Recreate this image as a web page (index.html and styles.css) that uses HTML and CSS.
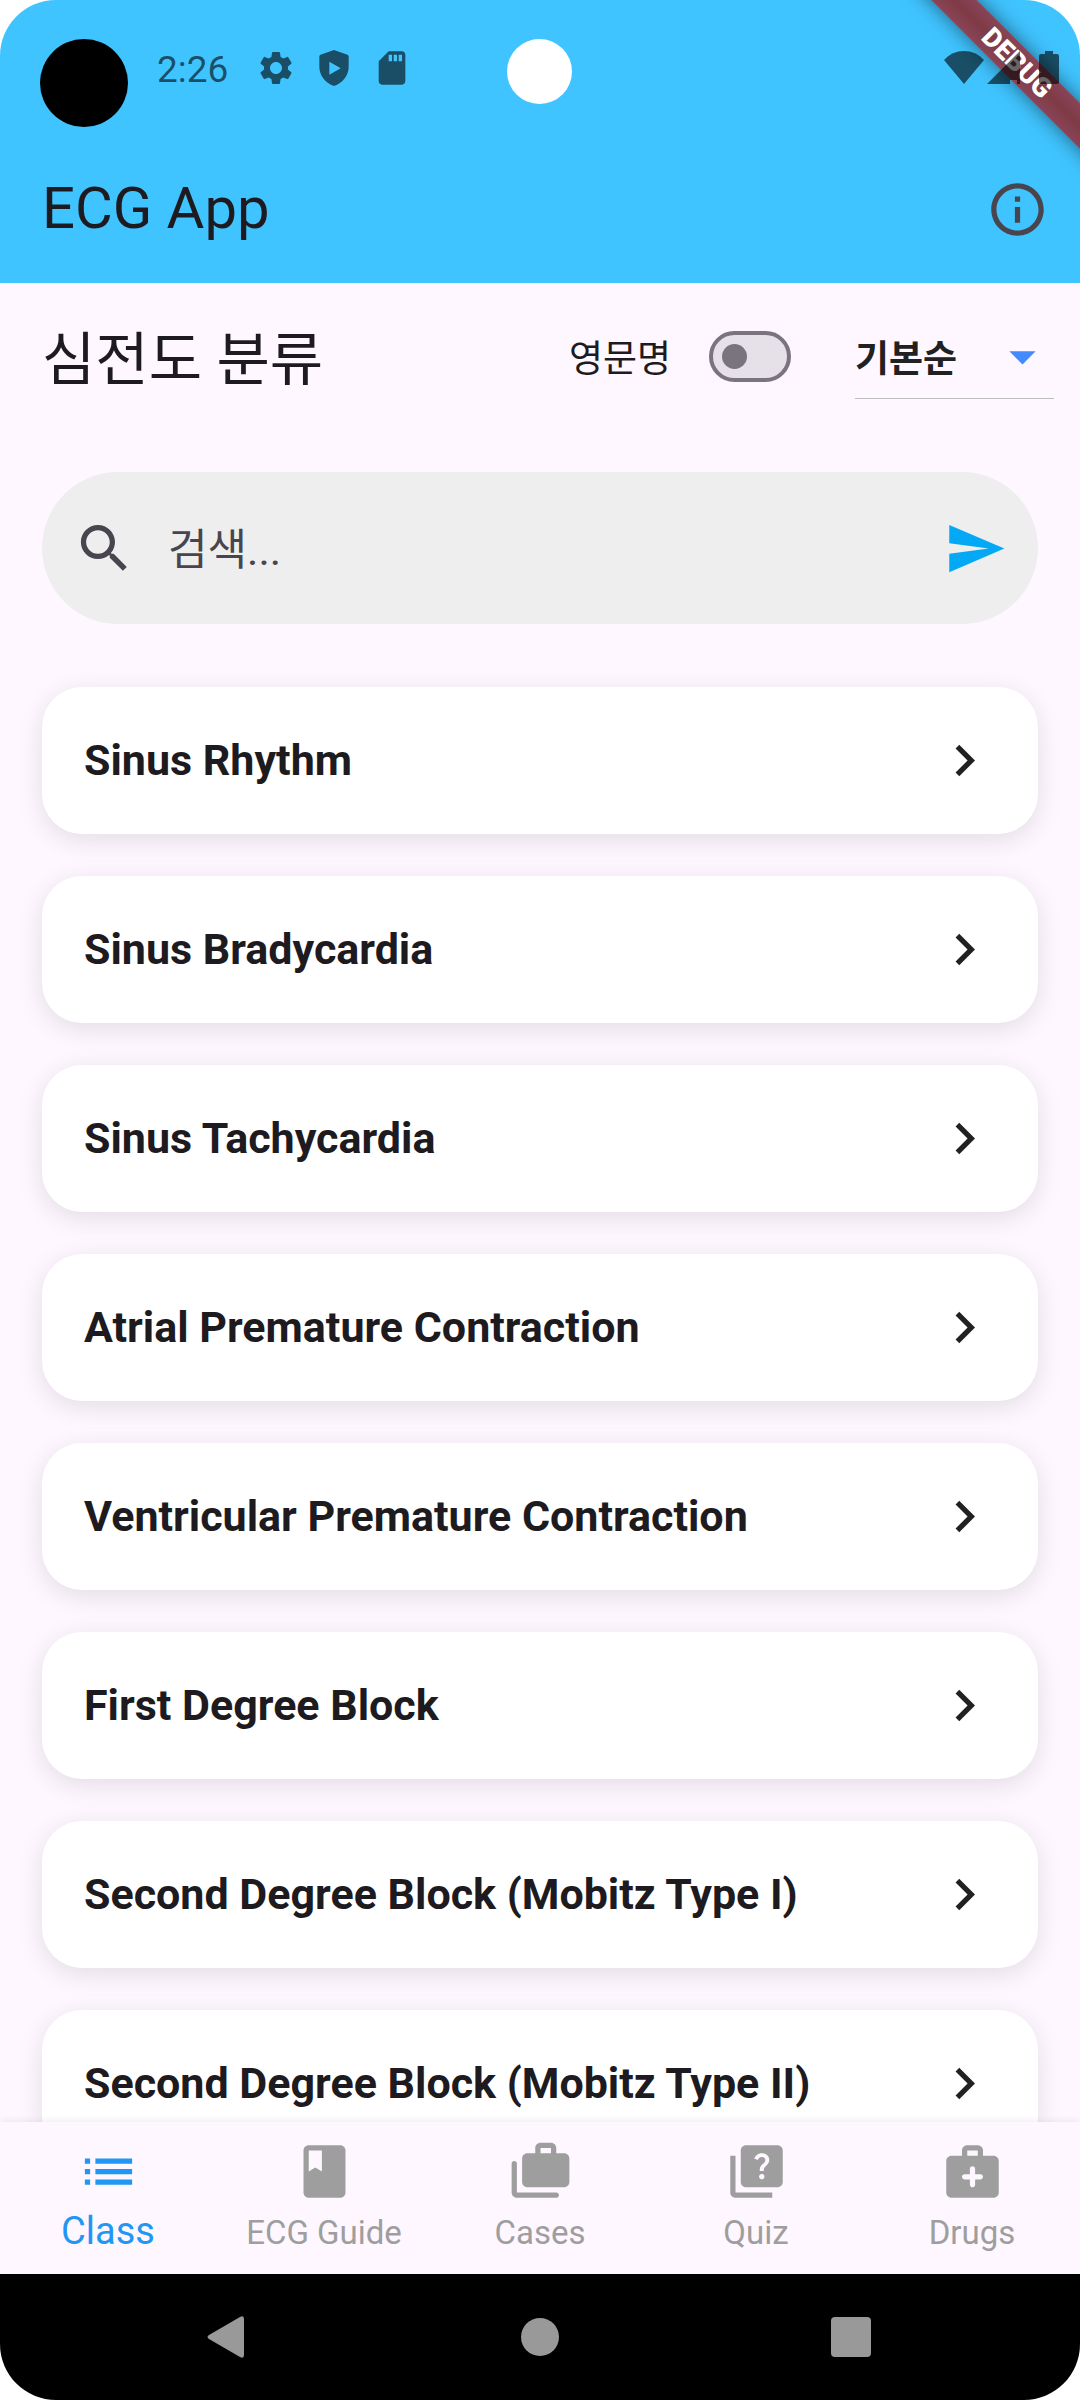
FILE: index.html
```html
<!DOCTYPE html>
<html lang="ko">
<head>
<meta charset="utf-8">
<meta name="viewport" content="width=device-width, initial-scale=1">
<title>ECG App</title>
<link rel="stylesheet" href="styles.css">
</head>
<body>
<div class="screen">
  <header class="header">
    <div class="banner" aria-hidden="true"><span class="banner-band">DEBUG</span></div>
    <div class="status">
      <span class="status-dot"></span>
      <span class="status-clock">2:26</span>
      <div class="status-icons">
        <svg viewBox="0 0 24 24"><path d="M19.14 12.94c.04-.3.06-.61.06-.94 0-.32-.02-.64-.07-.94l2.03-1.58c.18-.14.23-.41.12-.61l-1.92-3.32c-.12-.22-.37-.29-.59-.22l-2.39.96c-.5-.38-1.03-.7-1.62-.94L14.4 2.81c-.04-.24-.24-.41-.48-.41h-3.84c-.24 0-.43.17-.47.41L9.25 5.35C8.66 5.59 8.12 5.92 7.63 6.29L5.24 5.33c-.22-.08-.47 0-.59.22L2.74 8.87c-.12.21-.08.47.12.61l2.03 1.58c-.05.3-.09.63-.09.94s.02.64.07.94l-2.03 1.58c-.18.14-.23.41-.12.61l1.92 3.32c.12.22.37.29.59.22l2.39-.96c.5.38 1.03.7 1.62.94l.36 2.54c.05.24.24.41.48.41h3.84c.24 0 .44-.17.47-.41l.36-2.54c.59-.24 1.13-.56 1.62-.94l2.39.96c.22.08.47 0 .59-.22l1.92-3.32c.12-.22.07-.47-.12-.61l-2.01-1.58zM12 15.6c-1.98 0-3.6-1.62-3.6-3.6s1.62-3.6 3.6-3.6 3.6 1.62 3.6 3.6-1.62 3.6-3.6 3.6z"/></svg>
        <svg viewBox="0 0 24 24"><path fill-rule="evenodd" d="M12 1.2l8.1 2.9c.4.2.7.6.7 1.1v6c0 5.300-3.600 9.700-8.800 11.600C6.800 20.900 3.200 16.500 3.200 11.200v-6c0-.5.300-.9.700-1.100zM9.200 8.200v7.800l6.800-3.900z"/></svg>
        <svg viewBox="0 0 24 24"><path d="M18 2h-8L4.020 8 4 20c0 1.100.9 2 2 2h12c1.100 0 2-.9 2-2V4c0-1.100-.9-2-2-2zm-6 6h-2V4h2v4zm3 0h-2V4h2v4zm3 0h-2V4h2v4z"/></svg>
      </div>
      <span class="camera"></span>
      <div class="status-signal">
        <svg width="40" height="33" viewBox="0 0 40 33"><path d="M20 33L0 9Q8 0 20 0T40 9z"/></svg>
        <svg width="33" height="33" viewBox="0 0 33 33"><path d="M0 33L33 0V33H30V12H23V33zM23 29V12H30V29z" fill-rule="evenodd"/></svg>
        <svg class="battery" width="20" height="33" viewBox="0 0 20 33"><path d="M6 0h8v3h4q2 0 2 2v26q0 2-2 2H2q-2 0-2-2V5q0-2 2-2h4z"/></svg>
      </div>
    </div>
    <div class="appbar">
      <h1 class="appbar-title">ECG App</h1>
      <button class="icon-button" type="button" aria-label="Info">
        <svg class="icon" viewBox="0 0 24 24"><path d="M11 7h2v2h-2zm0 4h2v6h-2zm1-9C6.480 2 2 6.480 2 12s4.480 10 10 10 10-4.480 10-10S17.520 2 12 2zm0 18c-4.410 0-8-3.590-8-8s3.590-8 8-8 8 3.590 8 8-3.590 8-8 8z"/></svg>
      </button>
    </div>
  </header>

  <main class="content">
    <div class="toolbar">
      <h2 class="toolbar-title">심전도 분류</h2>
      <label class="toggle"><span class="toggle-label">영문명</span><input class="toggle-switch" type="checkbox" role="switch"></label>
      <div class="sort">
        <select class="sort-select" aria-label="정렬"><option>기본순</option></select>
        <svg class="icon sort-arrow" viewBox="0 0 24 24"><path d="M7 10l5 5 5-5z"/></svg>
      </div>
    </div>

    <form class="search" role="search">
      <svg class="icon" viewBox="0 0 24 24"><path d="M15.500 14h-.79l-.28-.27C15.410 12.590 16 11.110 16 9.500 16 5.910 13.090 3 9.500 3S3 5.910 3 9.500 5.910 16 9.500 16c1.610 0 3.090-.59 4.230-1.570l.27.28v.79l5 4.990L20.490 19l-4.990-5zm-6 0C7.010 14 5 11.990 5 9.500S7.010 5 9.500 5 14 7.010 14 9.500 11.990 14 9.500 14z"/></svg>
      <input class="search-input" type="text" placeholder="검색..." aria-label="검색">
      <button class="icon-button send" type="button" aria-label="Send">
        <svg class="icon" viewBox="0 0 24 24"><path d="M2.010 21L23 12 2.010 3 2 10l15 2-15 2z"/></svg>
      </button>
    </form>

    <div class="list">
      <button class="card" type="button">Sinus Rhythm<svg class="icon" viewBox="0 0 24 24"><path d="M10 6L8.590 7.410 13.170 12l-4.580 4.590L10 18l6-6z"/></svg></button>
      <button class="card" type="button">Sinus Bradycardia<svg class="icon" viewBox="0 0 24 24"><path d="M10 6L8.590 7.410 13.170 12l-4.580 4.590L10 18l6-6z"/></svg></button>
      <button class="card" type="button">Sinus Tachycardia<svg class="icon" viewBox="0 0 24 24"><path d="M10 6L8.590 7.410 13.170 12l-4.580 4.590L10 18l6-6z"/></svg></button>
      <button class="card" type="button">Atrial Premature Contraction<svg class="icon" viewBox="0 0 24 24"><path d="M10 6L8.590 7.410 13.170 12l-4.580 4.590L10 18l6-6z"/></svg></button>
      <button class="card" type="button">Ventricular Premature Contraction<svg class="icon" viewBox="0 0 24 24"><path d="M10 6L8.590 7.410 13.170 12l-4.580 4.590L10 18l6-6z"/></svg></button>
      <button class="card" type="button">First Degree Block<svg class="icon" viewBox="0 0 24 24"><path d="M10 6L8.590 7.410 13.170 12l-4.580 4.590L10 18l6-6z"/></svg></button>
      <button class="card" type="button">Second Degree Block (Mobitz Type I)<svg class="icon" viewBox="0 0 24 24"><path d="M10 6L8.590 7.410 13.170 12l-4.580 4.590L10 18l6-6z"/></svg></button>
      <button class="card" type="button">Second Degree Block (Mobitz Type II)<svg class="icon" viewBox="0 0 24 24"><path d="M10 6L8.590 7.410 13.170 12l-4.580 4.590L10 18l6-6z"/></svg></button>
    </div>
  </main>

  <nav class="tabs">
    <a class="tab tab-active" href="#class" aria-current="page">
      <svg class="icon" viewBox="0 0 24 24"><path d="M1 13h2v-2H1v2zm0 4h2v-2H1v2zm0-8h2V7H1v2zm4 4h14v-2H5v2zm0 4h14v-2H5v2zM5 7v2h14V7H5z" transform="translate(2)"/></svg>
      <span class="tab-label">Class</span>
    </a>
    <a class="tab" href="#guide">
      <svg class="icon" viewBox="0 0 24 24"><path fill-rule="evenodd" d="M18 2H6c-1.100 0-2 .9-2 2v16c0 1.100.9 2 2 2h12c1.100 0 2-.9 2-2V4c0-1.100-.9-2-2-2zM6 4h5v8l-2.500-1.500L6 12V4z"/></svg>
      <span class="tab-label">ECG Guide</span>
    </a>
    <a class="tab" href="#cases">
      <svg class="icon" viewBox="0 0 24 24"><path d="M18 20H3V9c0-.55-.45-1-1-1s-1 .45-1 1v11c0 1.100.9 2 2 2h15c.55 0 1-.45 1-1s-.45-1-1-1zM21 5h-3V3c0-1.100-.9-2-2-2h-4c-1.100 0-2 .9-2 2v2H7c-1.100 0-2 .9-2 2v9c0 1.100.9 2 2 2h14c1.100 0 2-.9 2-2V7c0-1.100-.9-2-2-2zm-5 0h-4V3h4v2z"/></svg>
      <span class="tab-label">Cases</span>
    </a>
    <a class="tab" href="#quiz">
      <svg class="icon" viewBox="0 0 24 24"><path d="M4 6H2v14c0 1.100.9 2 2 2h14v-2H4V6zm16-4H8c-1.100 0-2 .9-2 2v12c0 1.100.9 2 2 2h12c1.100 0 2-.9 2-2V4c0-1.100-.9-2-2-2zm-5.990 13c-.59 0-1.050-.47-1.050-1.050 0-.59.470-1.040 1.050-1.040.59 0 1.040.45 1.040 1.040-.01.580-.45 1.050-1.040 1.050zm2.500-6.170c-.63.930-1.230 1.210-1.560 1.810-.13.240-.18.400-.18 1.180h-1.520c0-.41-.06-1.080.26-1.650.41-.73 1.180-1.160 1.630-1.800.48-.68.210-1.940-1.140-1.940-.88 0-1.320.67-1.500 1.230l-1.370-.57C11.510 5.960 12.520 5 13.990 5c1.230 0 2.080.56 2.510 1.260.37.610.580 1.730.01 2.570z"/></svg>
      <span class="tab-label">Quiz</span>
    </a>
    <a class="tab" href="#drugs">
      <svg class="icon" viewBox="0 0 24 24"><path d="M20 6h-4V4c0-1.100-.9-2-2-2h-4c-1.100 0-2 .9-2 2v2H4c-1.100 0-2 .9-2 2v12c0 1.100.9 2 2 2h16c1.100 0 2-.9 2-2V8c0-1.100-.9-2-2-2zM10 4h4v2h-4V4zm5 11h-2v2c0 .55-.45 1-1 1s-1-.45-1-1v-2H9c-.55 0-1-.45-1-1s.45-1 1-1h2v-2c0-.55.45-1 1-1s1 .45 1 1v2h2c.55 0 1 .45 1 1s-.45 1-1 1z"/></svg>
      <span class="tab-label">Drugs</span>
    </a>
  </nav>

  <div class="system-nav">
    <button class="system-button" type="button" aria-label="Back"><svg width="46" height="42" viewBox="0 0 46 42"><path d="M3 19L34 1q4-2 4 2v36q0 4-4 2L3 23q-3-2 0-4z"/></svg></button>
    <button class="system-button" type="button" aria-label="Home"><svg width="38" height="38" viewBox="0 0 38 38"><circle cx="19" cy="19" r="19"/></svg></button>
    <button class="system-button" type="button" aria-label="Recents"><svg width="40" height="40" viewBox="0 0 40 40"><rect width="40" height="40" rx="4"/></svg></button>
  </div>
</div>
</body>
</html>
```
FILE: styles.css
```css
* {
  box-sizing: border-box;
}

body {
  margin: 0;
  background: #fff;
  color: #1d1b20;
  font-family: Roboto, "Noto Sans CJK KR", sans-serif;
}

button,
input,
select {
  margin: 0;
  padding: 0;
  border: 0;
  background: none;
  color: inherit;
  font: inherit;
}

h1,
h2 {
  margin: 0;
  font-size: 58px;
  font-weight: 400;
  line-height: 72px;
}

svg {
  display: block;
  flex: none;
  fill: currentColor;
}

.icon {
  width: 63px;
  height: 63px;
}

.icon-button {
  display: flex;
  flex: none;
  color: #49454f;
}

.screen {
  display: flex;
  flex-direction: column;
  height: 100vh;
  overflow: hidden;
  border-radius: 56px;
  background: #fef7ff;
}

/* Header: status bar and app bar share one background */
.header {
  position: relative;
  flex: none;
  background: #40c4ff;
}

.status {
  position: relative;
  display: flex;
  align-items: flex-start;
  height: 136px;
  padding: 39px 21px 0 40px;
  color: rgba(0, 0, 0, 0.6);
}

.status-dot {
  width: 88px;
  height: 88px;
  margin-right: 29px;
  border-radius: 50%;
  background: #000;
}

.status-clock {
  margin-right: 28px;
  font-size: 37px;
  line-height: 62px;
}

.status-icons {
  display: flex;
  gap: 18px;
  padding-top: 9px;
}

.status-icons svg {
  width: 40px;
  height: 40px;
}

.camera {
  position: absolute;
  top: 39px;
  left: 50%;
  width: 65px;
  height: 65px;
  margin-left: -33px;
  border-radius: 50%;
  background: #fff;
}

.status-signal {
  display: flex;
  gap: 3px;
  margin-left: auto;
  padding-top: 12px;
}

.battery {
  margin-left: 16px;
}

.banner {
  position: absolute;
  top: 0;
  right: 0;
  width: 200px;
  height: 200px;
  overflow: hidden;
}

.banner-band {
  position: absolute;
  top: 47px;
  left: -13px;
  width: 300px;
  height: 32px;
  background: linear-gradient(#884558, #7f3a45 50%, #884558);
  box-shadow: 0 0 20px rgba(0, 0, 0, 0.5);
  color: #fff;
  font-size: 27px;
  font-weight: 900;
  line-height: 32px;
  text-align: center;
  transform: rotate(45deg);
}

.appbar {
  display: flex;
  align-items: center;
  justify-content: space-between;
  height: 147px;
  padding: 0 31px 0 42px;
}

.appbar-title {
  padding-bottom: 4px;
}

/* Content */
.content {
  display: flex;
  flex: 1;
  flex-direction: column;
  min-height: 0;
}

.toolbar {
  display: flex;
  flex: none;
  align-items: center;
  height: 147px;
  padding: 0 26px 0 42px;
}

.toolbar-title {
  flex: 1;
  padding-top: 6px;
}

.toggle {
  display: flex;
  align-items: center;
  gap: 38px;
  margin-right: 64px;
  font-size: 37px;
  line-height: 52px;
}

.toggle-label {
  padding-top: 6px;
}

.toggle-switch {
  display: flex;
  align-items: center;
  width: 82px;
  height: 51px;
  padding-left: 9px;
  border: 4px solid #79747e;
  border-radius: 26px;
  background: #e6e0e9;
  appearance: none;
}

.toggle-switch::before {
  width: 25px;
  height: 25px;
  border-radius: 50%;
  background: #79747e;
  content: "";
}

.sort {
  position: relative;
  width: 199px;
}

.sort-select {
  display: block;
  width: 100%;
  height: 85px;
  padding-top: 6px;
  border-bottom: 1px solid #bdbdbd;
  color: #212121;
  font-size: 37px;
  font-weight: 700;
  appearance: none;
}

.sort-arrow {
  position: absolute;
  top: 11px;
  right: 0;
  color: #448aff;
  pointer-events: none;
}

.search {
  display: flex;
  flex: none;
  align-items: center;
  gap: 32px;
  height: 152px;
  margin: 42px 42px 0;
  padding: 0 31px;
  border-radius: 76px;
  background: #eee;
  color: #49454f;
}

.search-input {
  flex: 1;
  min-width: 0;
  height: 66px;
  padding-top: 4px;
  outline: 0;
  font-size: 43px;
}

.search-input::placeholder {
  color: #49454f;
  opacity: 1;
}

.send {
  color: #03a9f4;
}

.list {
  display: flex;
  flex: 1;
  flex-direction: column;
  gap: 42px;
  min-height: 0;
  margin-top: 21px;
  padding: 42px 42px 0;
  overflow-y: auto;
  scrollbar-width: none;
}

.card {
  display: flex;
  flex: none;
  align-items: center;
  justify-content: space-between;
  padding: 42px;
  border-radius: 40px;
  background: #fff;
  box-shadow: 0 6px 26px rgba(0, 0, 0, 0.11);
  font-size: 43px;
  font-weight: 700;
  line-height: 63px;
  text-align: left;
}

.card .icon {
  color: #212121;
}

/* Bottom tabs */
.tabs {
  position: relative;
  display: grid;
  flex: none;
  grid-template-columns: repeat(5, 1fr);
  height: 152px;
  background: #fef7ff;
  box-shadow: 0 0 8px rgba(0, 0, 0, 0.1);
}

.tab {
  display: flex;
  flex-direction: column;
  align-items: center;
  padding-top: 18px;
  color: #9e9e9e;
  text-decoration: none;
}

.tab-label {
  font-size: 33px;
  line-height: 60px;
}

.tab-active {
  color: #2196f3;
}

.tab-active .tab-label {
  font-size: 38px;
  line-height: 56px;
}

.system-nav {
  display: grid;
  flex: none;
  grid-template-columns: repeat(3, 1fr);
  height: 126px;
  padding: 0 73px;
  background: #000;
}

.system-button {
  display: flex;
  align-items: center;
  justify-content: center;
  color: #999;
}
```
